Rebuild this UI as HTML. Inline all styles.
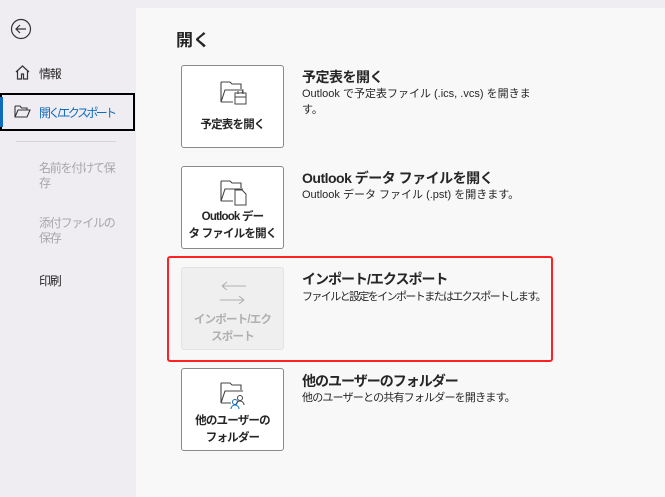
<!DOCTYPE html>
<html><head><meta charset="utf-8"><style>
*{margin:0;padding:0;box-sizing:border-box}
body{width:665px;height:497px;overflow:hidden;background:#efedf1;font-family:"Liberation Sans","Noto Sans CJK JP",sans-serif;position:relative;color:#262626}
.main{position:absolute;left:136px;top:8px;right:0;bottom:0;background:#f8f8f8}
.abs{position:absolute}
.nav{position:absolute;left:39px;font-size:12px;color:#262626;letter-spacing:-1.2px;white-space:nowrap}
.tile{position:absolute;left:181px;width:103px;height:83px;background:#fff;border:1px solid #8a8a8a;border-radius:3px;text-align:center;font-size:11.5px;font-weight:bold;line-height:17px;letter-spacing:-0.8px}
.tile svg{display:block;margin:0 auto}
.t{position:absolute;left:302px;font-size:14px;font-weight:bold;letter-spacing:-0.5px}
.d{position:absolute;left:302px;font-size:11px;line-height:16px;white-space:nowrap}
</style></head><body>
<svg class="abs" style="left:10px;top:18px" width="22" height="22" viewBox="0 0 22 22"><circle cx="11" cy="11" r="9.5" fill="none" stroke="#333" stroke-width="1.2"/><path d="M16 11H6M10 7l-4 4 4 4" fill="none" stroke="#333" stroke-width="1.2"/></svg>
<svg class="abs" style="left:14px;top:64px" width="17" height="17" viewBox="0 0 17 17"><path d="M2 8L8.5 2 15 8M3.5 7v8h4v-5h2v5h4V7" fill="none" stroke="#333" stroke-width="1.2"/></svg>
<div class="nav" style="top:65px">情報</div>
<div class="abs" style="left:0;top:93px;width:135px;height:38px;border:2px solid #000"></div>
<div class="abs" style="left:0;top:97px;width:3px;height:30px;background:#0f6cbd"></div>
<svg class="abs" style="left:14px;top:105px" width="17" height="14" viewBox="0 0 17 14"><path d="M1 1h5l1.5 2H13v2M1 1v11h12l3-7H4L1 12" fill="none" stroke="#333" stroke-width="1.1"/></svg>
<div class="nav" style="top:104px;color:#0f6cbd;letter-spacing:-2.6px">開く/エクスポート</div>
<div class="abs" style="left:16px;top:141px;width:100px;height:1px;background:#d6d4d8"></div>
<div class="nav" style="top:161px;color:#a8a6aa;line-height:15px">名前を付けて保<br>存</div>
<div class="nav" style="top:216px;color:#a8a6aa;line-height:15px">添付ファイルの<br>保存</div>
<div class="nav" style="top:272px">印刷</div>
<div class="main"></div>
<div class="abs" style="left:176px;top:26px;font-size:17px;font-weight:bold">開く</div>

<div class="tile" style="top:65px"><svg style="margin-top:14px" width="32" height="28" viewBox="0 0 32 28"><path d="M4 2h9l2 2h9v5M4 2v20l4-12h18l-1 3M4 22h12" fill="none" stroke="#444" stroke-width="1.1"/><rect x="18" y="13" width="11" height="11" fill="#fff" stroke="#444"/><path d="M18 17h11M21 11v3M26 11v3" stroke="#444"/></svg><div style="margin-top:9px">予定表を開く</div></div>
<div class="t" style="top:67px">予定表を開く</div>
<div class="d" style="top:86px">Outlook で予定表ファイル (.ics, .vcs) を開きま<br>す。</div>

<div class="tile" style="top:166px"><svg style="margin-top:12px" width="32" height="28" viewBox="0 0 32 28"><path d="M4 2h9l2 2h9v5M4 2v20l4-12h18M4 22h12" fill="none" stroke="#444" stroke-width="1.1"/><path d="M18 11h7l4 4v11H18z" fill="#fff" stroke="#444"/></svg><div style="margin-top:2px">Outlook デー<br>タ ファイルを開く</div></div>
<div class="t" style="top:168px">Outlook データ ファイルを開く</div>
<div class="d" style="top:187px">Outlook データ ファイル (.pst) を開きます。</div>

<div class="tile" style="top:267px;background:#efefef;border-color:#e2e2e2;color:#b0b0b0"><svg style="margin-top:12px" width="32" height="28" viewBox="0 0 32 28"><path d="M5 6h24M5 6l5-4M5 6l5 4M3 20h24M27 20l-5-4M27 20l-5 4" fill="none" stroke="#b0b0b0" stroke-width="1.1"/></svg><div style="margin-top:4px">インポート/エク<br>スポート</div></div>
<div class="abs" style="left:167px;top:256px;width:386px;height:106px;border:2px solid #f22;border-radius:3px"></div>
<div class="t" style="top:269px;letter-spacing:-1px">インポート/エクスポート</div>
<div class="d" style="top:289px;letter-spacing:-1.6px">ファイルと設定をインポートまたはエクスポートします。</div>

<div class="tile" style="top:368px"><svg style="margin-top:12px" width="32" height="28" viewBox="0 0 32 28"><path d="M4 2h9l2 2h9v5M4 2v20l4-12h18M4 22h10" fill="none" stroke="#444" stroke-width="1.1"/><circle cx="23" cy="17" r="2.5" fill="none" stroke="#444"/><path d="M19 24a4 4 0 0 1 8 0" fill="none" stroke="#444"/><circle cx="18" cy="21" r="2.5" fill="none" stroke="#0f6cbd"/><path d="M14 28a4 4 0 0 1 8 0" fill="none" stroke="#0f6cbd"/></svg><div style="margin-top:4px">他のユーザーの<br>フォルダー</div></div>
<div class="t" style="top:371px;letter-spacing:-1px">他のユーザーのフォルダー</div>
<div class="d" style="top:390px;letter-spacing:-0.8px">他のユーザーとの共有フォルダーを開きます。</div>
</body></html>
